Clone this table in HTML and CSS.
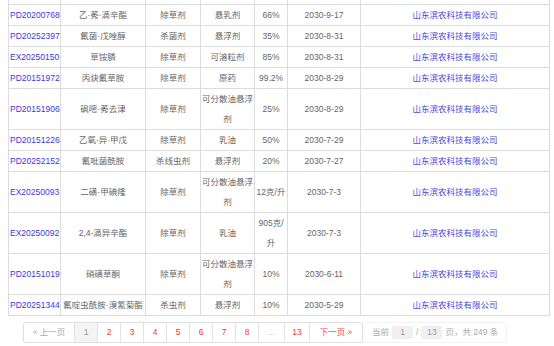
FILE: index.html
```html
<!DOCTYPE html>
<html lang="zh-CN">
<head>
<meta charset="utf-8">
<link rel="stylesheet" href="styles.css">
</head>
<body>
<div class="wrap">
  <table class="grid">
    <colgroup>
      <col class="c1"><col class="c2"><col class="c3"><col class="c4"><col class="c5"><col class="c6"><col class="c7">
    </colgroup>
    <tr class="cut"><td></td><td></td><td></td><td></td><td></td><td></td><td></td></tr>
    <tr><td><a class="lnk">PD20200768</a></td><td>乙·莠·滴辛酯</td><td>除草剂</td><td>悬乳剂</td><td>66%</td><td>2030-9-17</td><td><a class="co">山东滨农科技有限公司</a></td></tr>
    <tr><td><a class="lnk">PD20252397</a></td><td>氟菌·戊唑醇</td><td>杀菌剂</td><td>悬浮剂</td><td>35%</td><td>2030-8-31</td><td><a class="co">山东滨农科技有限公司</a></td></tr>
    <tr><td><a class="lnk">EX20250150</a></td><td>草铵膦</td><td>除草剂</td><td>可溶粒剂</td><td>85%</td><td>2030-8-31</td><td><a class="co">山东滨农科技有限公司</a></td></tr>
    <tr><td><a class="lnk">PD20151972</a></td><td>丙炔氟草胺</td><td>除草剂</td><td>原药</td><td>99.2%</td><td>2030-8-29</td><td><a class="co">山东滨农科技有限公司</a></td></tr>
    <tr><td><a class="lnk">PD20151906</a></td><td>砜嘧·莠去津</td><td>除草剂</td><td>可分散油悬浮剂</td><td>25%</td><td>2030-8-29</td><td><a class="co">山东滨农科技有限公司</a></td></tr>
    <tr><td><a class="lnk">PD20151226</a></td><td>乙氧·异·甲戊</td><td>除草剂</td><td>乳油</td><td>50%</td><td>2030-7-29</td><td><a class="co">山东滨农科技有限公司</a></td></tr>
    <tr><td><a class="lnk">PD20252152</a></td><td>氟吡菌酰胺</td><td>杀线虫剂</td><td>悬浮剂</td><td>20%</td><td>2030-7-27</td><td><a class="co">山东滨农科技有限公司</a></td></tr>
    <tr><td><a class="lnk">EX20250093</a></td><td>二磺·甲碘隆</td><td>除草剂</td><td>可分散油悬浮剂</td><td>12克/升</td><td>2030-7-3</td><td><a class="co">山东滨农科技有限公司</a></td></tr>
    <tr><td><a class="lnk">EX20250092</a></td><td>2,4-滴异辛酯</td><td>除草剂</td><td>乳油</td><td>905克/升</td><td>2030-7-3</td><td><a class="co">山东滨农科技有限公司</a></td></tr>
    <tr><td><a class="lnk">PD20151019</a></td><td>硝磺草酮</td><td>除草剂</td><td>可分散油悬浮剂</td><td>10%</td><td>2030-6-11</td><td><a class="co">山东滨农科技有限公司</a></td></tr>
    <tr><td><a class="lnk">PD20251344</a></td><td>氟啶虫酰胺·溴氰菊酯</td><td>杀虫剂</td><td>悬浮剂</td><td>10%</td><td>2030-5-29</td><td><a class="co">山东滨农科技有限公司</a></td></tr>
  </table>

  <div class="pager">
    <div class="pages">
      <span class="pg prev">« 上一页</span>
      <span class="pg num cur">1</span>
      <a class="pg num">2</a>
      <a class="pg num">3</a>
      <a class="pg num">4</a>
      <a class="pg num">5</a>
      <a class="pg num">6</a>
      <a class="pg num">7</a>
      <a class="pg num">8</a>
      <span class="pg dots">...</span>
      <a class="pg last">13</a>
      <a class="pg next">下一页 »</a>
    </div>
    <div class="info">
      <span>当前</span>
      <span class="box">1</span>
      <span>/</span>
      <span class="box">13</span>
      <span>页，共 249 条</span>
    </div>
  </div>
</div>
</body>
</html>
```

FILE: styles.css
```css
html, body {
  margin: 0;
  padding: 0;
  background: #fff;
}
body {
  font-family: "Liberation Sans", "Noto Sans CJK SC", sans-serif;
  font-size: 8.5px;
  color: #666;
}
.wrap {
  padding-left: 8px;
}
.grid {
  border-collapse: collapse;
  table-layout: fixed;
  width: 541px;
}
.c1 { width: 52px; }
.c2 { width: 85px; }
.c3 { width: 55px; }
.c4 { width: 54px; }
.c5 { width: 33px; }
.c6 { width: 73px; }
.c7 { width: 189px; }
.grid td {
  border: 1px solid #dcdcdc;
  padding: 0 1px;
  line-height: 20px;
  text-align: center;
  vertical-align: middle;
}
.grid .cut td {
  border-top: 0;
  height: 4px;
  line-height: 0;
  font-size: 0;
  padding: 0;
}
.lnk {
  color: #3b35f0;
  text-decoration: none;
}
.co {
  color: #4747e6;
  text-decoration: none;
}
.pager {
  display: flex;
  margin: 6px 0 0 15px;
}
.pages {
  display: flex;
  border: 1px solid #e0e0e0;
  border-radius: 3px;
  box-shadow: 0 1px 2px rgba(0, 0, 0, 0.06);
}
.pg {
  height: 19px;
  line-height: 19px;
  text-align: center;
  border-left: 1px solid #e3e3e3;
  color: #f33;
  text-decoration: none;
}
.prev {
  border-left: 0;
  width: 50px;
  color: #aaa;
}
.num { width: 22px; }
.cur {
  background: #f4f4f4;
  color: #999;
}
.dots {
  width: 25px;
  color: #bbb;
}
.last { width: 24px; }
.next {
  width: 52px;
  color: #f43;
}
.info {
  display: flex;
  align-items: center;
  gap: 3px;
  padding: 0 8px 0 9px;
  border: 1px solid #f2f2f2;
  border-left: 0;
  border-radius: 0 3px 3px 0;
  color: #aaa;
  line-height: 19px;
}
.box {
  width: 21px;
  height: 13px;
  line-height: 13px;
  text-align: center;
  background: #f0f0f0;
  border-radius: 2px;
  color: #999;
}
```
